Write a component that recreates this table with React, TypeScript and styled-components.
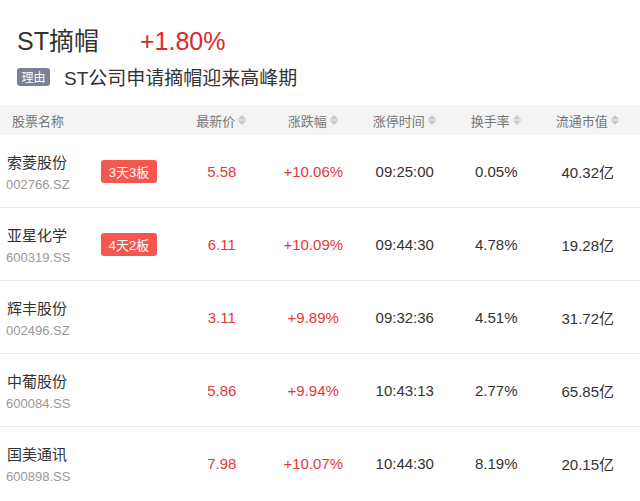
import React from "react"
import styled, { createGlobalStyle } from "styled-components"

const GlobalStyle = createGlobalStyle`
  html, body {
    margin: 0;
    padding: 0;
    background: #fff;
  }
  body {
    font-family: "Liberation Sans", Arial, "Noto Sans CJK SC", sans-serif;
    color: #333;
  }
`

interface Stock {
  name: string
  code: string
  badge?: string
  price: string
  change: string
  time: string
  turnover: string
  cap: string
}

const stocks: Stock[] = [
  { name: "索菱股份", code: "002766.SZ", badge: "3天3板", price: "5.58", change: "+10.06%", time: "09:25:00", turnover: "0.05%", cap: "40.32亿" },
  { name: "亚星化学", code: "600319.SS", badge: "4天2板", price: "6.11", change: "+10.09%", time: "09:44:30", turnover: "4.78%", cap: "19.28亿" },
  { name: "辉丰股份", code: "002496.SZ", price: "3.11", change: "+9.89%", time: "09:32:36", turnover: "4.51%", cap: "31.72亿" },
  { name: "中葡股份", code: "600084.SS", price: "5.86", change: "+9.94%", time: "10:43:13", turnover: "2.77%", cap: "65.85亿" },
  { name: "国美通讯", code: "600898.SS", price: "7.98", change: "+10.07%", time: "10:44:30", turnover: "8.19%", cap: "20.15亿" },
]

const sortable = ["最新价", "涨跌幅", "涨停时间", "换手率", "流通市值"]

const SortIcon: React.FC = () => (
  <svg width="10" height="12" viewBox="0 0 10 12">
    <path d="M5 1 L9.5 5.5 L0.5 5.5 Z" fill="#cbcbcb" />
    <path d="M0.5 6.5 L9.5 6.5 L5 11 Z" fill="#cbcbcb" />
  </svg>
)

const App: React.FC = () => {
  return (
    <Page>
      <GlobalStyle />
      <Top>
        <TitleRow>
          <Title>ST摘帽</Title>
          <Change>+1.80%</Change>
        </TitleRow>
        <ReasonRow>
          <Tag>理由</Tag>
          <Reason>ST公司申请摘帽迎来高峰期</Reason>
        </ReasonRow>
      </Top>
      <Head>
        <HeadName>股票名称</HeadName>
        {sortable.map((h) => (
          <HeadCell key={h}>
            {h}
            <SortIcon />
          </HeadCell>
        ))}
      </Head>
      {stocks.map((s) => (
        <Row key={s.code}>
          <NameCell>
            <NameBlock>
              <Name>{s.name}</Name>
              <Code>{s.code}</Code>
            </NameBlock>
            {s.badge && <Badge>{s.badge}</Badge>}
          </NameCell>
          <Cell $red>{s.price}</Cell>
          <Cell $red>{s.change}</Cell>
          <Cell>{s.time}</Cell>
          <Cell>{s.turnover}</Cell>
          <Cell>{s.cap}</Cell>
        </Row>
      ))}
    </Page>
  )
}

const Page = styled.div`
  width: 640px;
  height: 501px;
  overflow: hidden;
  background: #fff;
`

const Top = styled.div`
  height: 105px;
  padding: 21px 0 0 17px;
  box-sizing: border-box;
`

const TitleRow = styled.div`
  display: flex;
  align-items: baseline;
  height: 34px;
`

const Title = styled.div`
  font-size: 25px;
  color: #333;
  width: 123px;
`

const Change = styled.div`
  font-size: 25px;
  color: #e0262b;
`

const ReasonRow = styled.div`
  display: flex;
  align-items: center;
  margin-top: 8px;
`

const Tag = styled.span`
  display: inline-flex;
  align-items: center;
  justify-content: center;
  width: 33px;
  height: 18px;
  border-radius: 3px;
  background: #7b8196;
  color: #fff;
  font-size: 12px;
`

const Reason = styled.span`
  font-size: 19px;
  color: #333;
  margin-left: 14px;
`

const Grid = styled.div`
  display: grid;
  grid-template-columns: 176px repeat(5, 91.5px);
`

const Head = styled(Grid)`
  height: 30px;
  background: #f4f4f4;
  align-items: center;
  font-size: 13px;
  color: #777;
`

const HeadName = styled.div`
  padding-left: 12px;
`

const HeadCell = styled.div`
  display: flex;
  align-items: center;
  justify-content: center;
  gap: 2px;
`

const Row = styled(Grid)`
  height: 73px;
  box-sizing: border-box;
  border-bottom: 1px solid #ececec;
  align-items: center;
  &:last-child {
    border-bottom: none;
  }
`

const NameCell = styled.div`
  display: flex;
  align-items: center;
`

const NameBlock = styled.div`
  width: 101px;
  padding-left: 7px;
  box-sizing: border-box;
  display: flex;
  flex-direction: column;
  gap: 5px;
`

const Name = styled.div`
  font-size: 15px;
  color: #333;
`

const Code = styled.div`
  font-size: 13px;
  color: #999;
  margin-left: -1px;
`

const Badge = styled.span`
  display: inline-flex;
  align-items: center;
  justify-content: center;
  width: 56px;
  height: 23px;
  border-radius: 3px;
  background: #f5574f;
  color: #fff;
  font-size: 13px;
`

const Cell = styled.div<{ $red?: boolean }>`
  text-align: center;
  font-size: 15px;
  color: ${(p) => (p.$red ? "#e4393c" : "#333")};
`

export default App
